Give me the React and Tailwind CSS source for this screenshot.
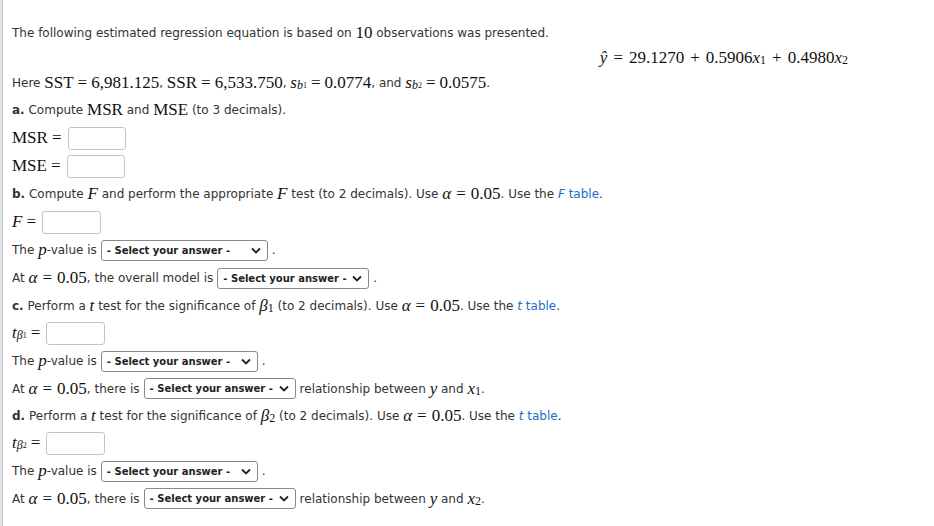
import React from 'react';

const sans = { fontFamily: '"DejaVu Sans", Verdana, sans-serif' };

// math in a serif face, roughly like KaTeX output
const M = ({ children, className = '' }) => (
    <span className={`text-[17px] text-[#111] ${className}`} style={{ fontFamily: '"Liberation Serif", "DejaVu Serif", serif' }}>
        {children}
    </span>
);
const I = ({ children }) => <i>{children}</i>;
const Sub = ({ children }) => <sub className="text-[12px] relative -bottom-[1px]">{children}</sub>;
const Sub2 = ({ children }) => <sub className="text-[8px] relative bottom-[1px] not-italic">{children}</sub>;
const Op = ({ children, m = 'mx-[4px]' }) => <span className={m}>{children}</span>;

const Box = ({ w = 'w-[58px]' }) => (
    <span className={`inline-block ${w} h-[23px] border border-[#c4c4c4] rounded-[3px] bg-white ml-[2px]`} />
);

const Select = ({ w }) => (
    <span className={`inline-flex items-center justify-between ${w} h-[21px] border border-[#8a8a8a] rounded-[3px] pl-[5px] pr-[6px] mx-1 text-[10px] font-bold text-[#222] bg-white`}>
        <span>- Select your answer -</span>
        <svg width="10" height="7" viewBox="0 0 10 7" className="ml-1 shrink-0">
            <polyline points="1,1.5 5,5.5 9,1.5" fill="none" stroke="#222" strokeWidth="1.8" />
        </svg>
    </span>
);

const Row = ({ h = 'h-[28px]', children }) => (
    <div className={`flex items-center whitespace-pre ${h}`}>{children}</div>
);

const Link = ({ children }) => <span className="text-[#1a6fc9]">{children}</span>;

const Eq = () => <M className="mx-[4px]">=</M>;

export default function App() {
    return (
        <div className="min-h-[526px] w-[934px] bg-white flex" style={sans}>
            <div className="w-[3px] bg-[#e3e3e3] border-r border-[#c8c8c8]" />
            <div className="flex-1 pl-[9px] pt-[20px] text-[12px] text-[#333]">
                <Row h="h-[26px]">
                    The following estimated regression equation is based on <M>10</M> observations was presented.
                </Row>
                <div className="flex justify-end pr-[86px] h-[24px] items-center">
                    <M>
                        <I>ŷ</I><Op m="mx-[6px]">=</Op>29.1270<Op m="mx-[6px]">+</Op>0.5906<I>x</I><Sub>1</Sub><Op m="mx-[6px]">+</Op>0.4980<I>x</I><Sub>2</Sub>
                    </M>
                </div>
                <Row h="h-[26px]">
                    Here <M>SST<Op>=</Op>6,981.125</M>, <M>SSR<Op>=</Op>6,533.750</M>, <M><I>s</I><Sub><I>b</I><Sub2>1</Sub2></Sub><Op>=</Op>0.0774</M>, and <M><I>s</I><Sub><I>b</I><Sub2>2</Sub2></Sub><Op>=</Op>0.0575</M>.
                </Row>
                <Row>
                    <b>a.</b> Compute <M>MSR</M> and <M>MSE</M> (to 3 decimals).
                </Row>
                <Row>
                    <M>MSR</M><Eq /><Box />
                </Row>
                <Row>
                    <M>MSE</M><Eq /><Box />
                </Row>
                <Row>
                    <b>b.</b> Compute <M><I>F</I></M> and perform the appropriate <M><I>F</I></M> test (to 2 decimals). Use <M><I>α</I><Op m="mx-[5px]">=</Op>0.05</M>. Use the <Link><i>F</i> table</Link>.
                </Row>
                <Row>
                    <M><I>F</I></M><Eq /><Box w="w-[59px]" />
                </Row>
                <Row>
                    The <M><I>p</I></M>-value is<Select w="w-[167px]" />.
                </Row>
                <Row>
                    At <M><I>α</I><Op m="mx-[5px]">=</Op>0.05</M>, the overall model is<Select w="w-[152px]" />.
                </Row>
                <Row h="h-[27px]">
                    <b>c.</b> Perform a <M><I>t</I></M> test for the significance of <M><I>β</I><Sub>1</Sub></M> (to 2 decimals). Use <M><I>α</I><Op m="mx-[5px]">=</Op>0.05</M>. Use the <Link><i>t</i> table</Link>.
                </Row>
                <Row>
                    <M><I>t</I><Sub><I>β</I><Sub2>1</Sub2></Sub></M><Eq /><Box w="w-[59px]" />
                </Row>
                <Row>
                    The <M><I>p</I></M>-value is<Select w="w-[157px]" />.
                </Row>
                <Row h="h-[27px]">
                    At <M><I>α</I><Op m="mx-[5px]">=</Op>0.05</M>, there is<Select w="w-[152px]" />relationship between <M><I>y</I></M> and <M><I>x</I><Sub>1</Sub></M>.
                </Row>
                <Row h="h-[27px]">
                    <b>d.</b> Perform a <M><I>t</I></M> test for the significance of <M><I>β</I><Sub>2</Sub></M> (to 2 decimals). Use <M><I>α</I><Op m="mx-[5px]">=</Op>0.05</M>. Use the <Link><i>t</i> table</Link>.
                </Row>
                <Row>
                    <M><I>t</I><Sub><I>β</I><Sub2>2</Sub2></Sub></M><Eq /><Box w="w-[59px]" />
                </Row>
                <Row>
                    The <M><I>p</I></M>-value is<Select w="w-[157px]" />.
                </Row>
                <Row h="h-[27px]">
                    At <M><I>α</I><Op m="mx-[5px]">=</Op>0.05</M>, there is<Select w="w-[152px]" />relationship between <M><I>y</I></M> and <M><I>x</I><Sub>2</Sub></M>.
                </Row>
            </div>
        </div>
    );
}
